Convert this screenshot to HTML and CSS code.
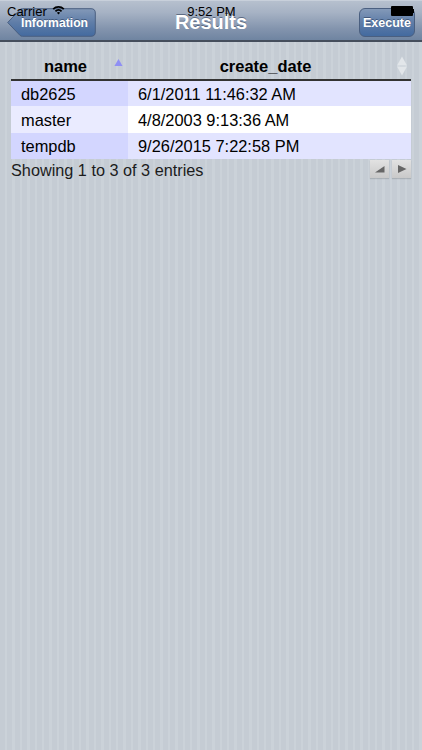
FILE: index.html
```html
<!DOCTYPE html>
<html lang="en">
<head>
<meta charset="utf-8">
<title>Results</title>
<link rel="stylesheet" href="styles.css">
</head>
<body>
<div class="screen">
  <header class="navbar">
    <button class="nav-back">
      <svg class="nav-back-shape" viewBox="0 0 89 29" preserveAspectRatio="none">
        <defs>
          <linearGradient id="backfill" x1="0" y1="0" x2="0" y2="1">
            <stop offset="0" stop-color="#8399b8"/>
            <stop offset="0.5" stop-color="#5f7da8"/>
            <stop offset="1" stop-color="#436a9f"/>
          </linearGradient>
        </defs>
        <path d="M0.7 14.5 L13 1.6 Q14 0.7 15.5 0.7 L84 0.7 Q88.3 0.7 88.3 5 L88.3 24 Q88.3 28.3 84 28.3 L15.5 28.3 Q14 28.3 13 27.4 Z" fill="url(#backfill)" stroke="#4a5f80" stroke-width="1"/>
      </svg>
      <span class="nav-back-label">Information</span>
    </button>
    <h1 class="nav-title">Results</h1>
    <button class="nav-action">Execute</button>
  </header>

  <div class="statusbar">
    <div class="status-left">
      <span>Carrier</span>
      <svg class="wifi" viewBox="0 0 14 10">
        <path d="M0.6 3.4 A9 9 0 0 1 13.4 3.4 L12 4.8 A7 7 0 0 0 2 4.8 Z" fill="#000"/>
        <path d="M3 5.7 A5.6 5.6 0 0 1 11 5.7 L9.6 7.1 A3.6 3.6 0 0 0 4.4 7.1 Z" fill="#000"/>
        <path d="M5.3 8 A2.4 2.4 0 0 1 8.7 8 L7 9.8 Z" fill="#000"/>
      </svg>
    </div>
    <span class="status-time">9:52 PM</span>
    <div class="battery"><span class="battery-body"></span><span class="battery-tip"></span></div>
  </div>

  <main class="content">
    <table class="grid">
      <thead>
        <tr>
          <th class="col-name">name
            <svg class="sort sort-asc" viewBox="0 0 10 9"><path d="M5 0.5 L9.5 8.5 L0.5 8.5 Z" fill="#8f8ff4"/></svg>
          </th>
          <th class="col-date">create_date
            <svg class="sort sort-both" viewBox="0 0 12 20"><path d="M6 0.5 L11 9.5 L1 9.5 Z" fill="#e2e6ea"/><path d="M1 10.5 L11 10.5 L6 19.5 Z" fill="#e2e6ea"/></svg>
          </th>
        </tr>
      </thead>
      <tbody>
        <tr class="odd"><td class="sorted">db2625</td><td>6/1/2011 11:46:32 AM</td></tr>
        <tr class="even"><td class="sorted">master</td><td>4/8/2003 9:13:36 AM</td></tr>
        <tr class="odd"><td class="sorted">tempdb</td><td>9/26/2015 7:22:58 PM</td></tr>
      </tbody>
    </table>
    <div class="table-footer">
      <span class="table-info">Showing 1 to 3 of 3 entries</span>
      <div class="pager">
        <button class="page-btn"><svg viewBox="0 0 12 10"><path d="M1 8.5 L10.5 2 L10.5 8.5 Z" fill="#666"/></svg></button>
        <button class="page-btn"><svg viewBox="0 0 12 10"><path d="M2 1 L10.5 5 L2 9 Z" fill="#666"/></svg></button>
      </div>
    </div>
  </main>
</div>
</body>
</html>
```
FILE: styles.css
```css
* { box-sizing: border-box; }
html, body { margin: 0; padding: 0; }
body { font-family: "Liberation Sans", Arial, sans-serif; }

.screen {
  position: relative;
  width: 422px;
  height: 750px;
  overflow: hidden;
  display: flex;
  flex-direction: column;
  background-color: #c5ccd4;
  background-image: repeating-linear-gradient(90deg, #c5ccd4 0, #c5ccd4 5px, #cbd2d9 5px, #cbd2d9 7.4px);
}

.navbar {
  position: relative;
  flex: none;
  height: 42px;
  padding: 8px 7px 0;
  display: flex;
  justify-content: space-between;
  align-items: flex-start;
  background: linear-gradient(#b6c0ce 0, #a6b2c4 30%, #8495ae 70%, #6f84a1 100%);
  border-top: 1px solid #c8d0db;
  border-bottom: 2px solid #454e5c;
}

.nav-back, .nav-action {
  height: 29px;
  margin-top: -1px;
  padding: 0;
  border: 0;
  color: #fff;
  font: bold 12.2px "Liberation Sans", Arial, sans-serif;
  text-shadow: 0 -1px 0 rgba(40, 60, 90, .6);
}

.nav-back {
  position: relative;
  width: 89px;
  background: none;
}
.nav-back-shape {
  position: absolute;
  inset: 0;
  width: 100%;
  height: 100%;
}
.nav-back-label {
  position: relative;
  display: block;
  padding-left: 14px;
  text-align: left;
}

.nav-action {
  width: 56px;
  font-size: 12.5px;
  border: 1px solid #4a5f80;
  border-radius: 6px;
  background: linear-gradient(#8399b8, #5f7da8 50%, #436a9f);
}

.nav-title {
  position: absolute;
  left: 0;
  right: 0;
  top: 9px;
  margin: 0;
  text-align: center;
  color: #fff;
  font-size: 20px;
  line-height: 24px;
  font-weight: bold;
  text-shadow: 0 -1px 0 rgba(50, 65, 90, .6);
  pointer-events: none;
}

.statusbar {
  position: absolute;
  top: 4px;
  left: 0;
  right: 0;
  height: 15px;
  padding: 0 8px 0 7px;
  display: flex;
  justify-content: space-between;
  align-items: center;
  font-size: 13px;
  line-height: 15px;
  color: #000;
}
.status-left { display: flex; align-items: center; gap: 5px; }
.wifi { width: 13px; height: 10px; margin-top: -4px; }
.status-time {
  position: absolute;
  left: 1px;
  right: 0;
  text-align: center;
}
.battery { display: flex; align-items: center; margin-top: -2px; }
.battery-body { width: 22px; height: 10px; background: #000; border-radius: 1px; }
.battery-tip { width: 1px; height: 4px; background: #000; }

.content { padding: 10px 11px 0; }

.grid {
  width: 400px;
  border-collapse: collapse;
  table-layout: fixed;
  font-size: 16.4px;
  color: #000;
}
.grid th {
  position: relative;
  height: 28px;
  padding: 2px 8px 0 0;
  text-align: center;
  font-size: 16.5px;
  font-weight: bold;
  border-bottom: 2px solid #333;
}
.col-name { width: 117px; }
.grid td {
  height: 26.4px;
  padding: 2px 0 0 10px;
  line-height: 19px;
}

.odd td { background: #e2e4ff; }
.even td { background: #fff; }
.odd td.sorted { background: #d3d6ff; }
.even td.sorted { background: #eaebff; }

.sort { position: absolute; }
.sort-asc { width: 9px; height: 9px; top: 6px; right: 5px; }
.sort-both { width: 12px; height: 20px; top: 4px; right: 3px; }

.table-footer {
  display: flex;
  justify-content: space-between;
  align-items: flex-start;
}
.table-info {
  font-size: 16.25px;
  line-height: 22px;
  color: #1c1c1c;
}
.pager { display: flex; gap: 3px; padding-top: 1px; }
.page-btn {
  width: 19px;
  height: 18px;
  padding: 3px;
  border: 0;
  display: flex;
  align-items: center;
  justify-content: center;
  background: linear-gradient(#e2e2e2, #c9c9c9);
  box-shadow: 0 1px 1px rgba(120, 125, 130, .35);
}
.page-btn svg { width: 12px; height: 10px; }
```
